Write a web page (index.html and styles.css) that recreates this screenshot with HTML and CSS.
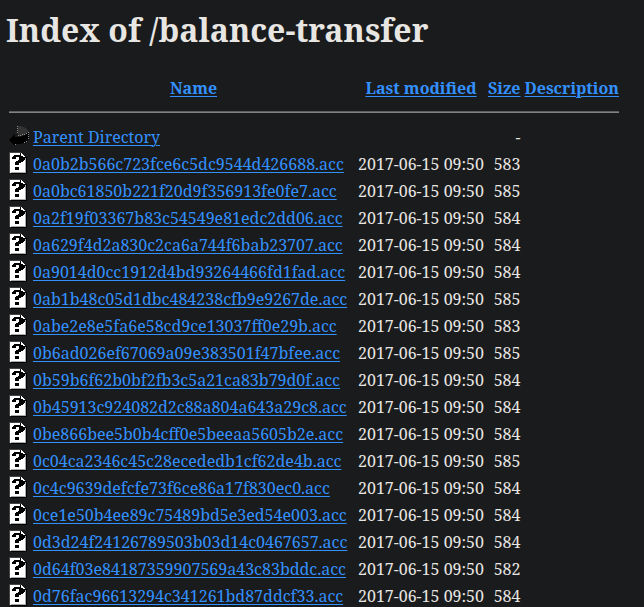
FILE: index.html
```html
<!DOCTYPE html>
<html lang="en">
<head>
<meta charset="utf-8">
<title>Index of /balance-transfer</title>
<link rel="stylesheet" href="styles.css">
</head>
<body>
<svg class="sprite" aria-hidden="true" shape-rendering="crispEdges">
  <symbol id="back" viewBox="0 0 20 22">
    <path d="M9 1h3l5 2 3 4-3 2-4 2H9z" fill="#333"/>
    <path d="M0 15l6-6v3h5l5-2 3-3h1v7l-3 3-5 2H6v2z" fill="#000"/>
    <path d="M8.500 1v8M19.500 7v7" stroke="#888" stroke-dasharray="1 1" fill="none"/>
    <path d="M9 10h1v1H9zM11 10h1v1h-1zM13 9h1v1h-1zM15 9h1v1h-1zM17 8h1v1h-1zM17 16h1v1h-1zM15 17h1v1h-1zM6 19h1v1H6z" fill="#888"/>
  </symbol>
  <symbol id="unknown" viewBox="0 0 20 22">
    <path d="M0 0h12v1H1v20H0z" fill="#444"/>
    <path d="M2 21h15V5h1v17H2z" fill="#000"/>
    <path d="M1 1h10v5h5v15H1z" fill="#fff"/>
    <path d="M16 6h1v15H2v-1h14z" fill="#aaa"/>
    <path d="M11 1h1v4h5v1h-6z" fill="#000"/>
    <path d="M12 1h1v1h1v1h1v1h1v1h-4z" fill="#fff"/>
    <path d="M5 3h7v1h2v1h2v3h-1v1h-1v1h-2v1h-2v2H6v-3h1V9h2V8h1V5H7v2H3V5h1V4h1zM6 15h4v3H6z" fill="#000"/>
  </symbol>
</svg>
<h1>Index of /balance-transfer</h1>
<table>
<thead>
<tr><th class="icon"></th><th class="name"><a href="#">Name</a></th><th><a href="#">Last modified</a></th><th><a href="#">Size</a></th><th><a href="#">Description</a></th></tr>
<tr><th colspan="5"><hr></th></tr>
</thead>
<tbody>
<tr><td><svg class="i"><use href="#back"/></svg></td><td><a href="#">Parent Directory</a></td><td></td><td>-</td><td></td></tr>
<tr><td><svg class="i"><use href="#unknown"/></svg></td><td><a href="#">0a0b2b566c723fce6c5dc9544d426688.acc</a></td><td>2017-06-15 09:50</td><td>583</td><td></td></tr>
<tr><td><svg class="i"><use href="#unknown"/></svg></td><td><a href="#">0a0bc61850b221f20d9f356913fe0fe7.acc</a></td><td>2017-06-15 09:50</td><td>585</td><td></td></tr>
<tr><td><svg class="i"><use href="#unknown"/></svg></td><td><a href="#">0a2f19f03367b83c54549e81edc2dd06.acc</a></td><td>2017-06-15 09:50</td><td>584</td><td></td></tr>
<tr><td><svg class="i"><use href="#unknown"/></svg></td><td><a href="#">0a629f4d2a830c2ca6a744f6bab23707.acc</a></td><td>2017-06-15 09:50</td><td>584</td><td></td></tr>
<tr><td><svg class="i"><use href="#unknown"/></svg></td><td><a href="#">0a9014d0cc1912d4bd93264466fd1fad.acc</a></td><td>2017-06-15 09:50</td><td>584</td><td></td></tr>
<tr><td><svg class="i"><use href="#unknown"/></svg></td><td><a href="#">0ab1b48c05d1dbc484238cfb9e9267de.acc</a></td><td>2017-06-15 09:50</td><td>585</td><td></td></tr>
<tr><td><svg class="i"><use href="#unknown"/></svg></td><td><a href="#">0abe2e8e5fa6e58cd9ce13037ff0e29b.acc</a></td><td>2017-06-15 09:50</td><td>583</td><td></td></tr>
<tr><td><svg class="i"><use href="#unknown"/></svg></td><td><a href="#">0b6ad026ef67069a09e383501f47bfee.acc</a></td><td>2017-06-15 09:50</td><td>585</td><td></td></tr>
<tr><td><svg class="i"><use href="#unknown"/></svg></td><td><a href="#">0b59b6f62b0bf2fb3c5a21ca83b79d0f.acc</a></td><td>2017-06-15 09:50</td><td>584</td><td></td></tr>
<tr><td><svg class="i"><use href="#unknown"/></svg></td><td><a href="#">0b45913c924082d2c88a804a643a29c8.acc</a></td><td>2017-06-15 09:50</td><td>584</td><td></td></tr>
<tr><td><svg class="i"><use href="#unknown"/></svg></td><td><a href="#">0be866bee5b0b4cff0e5beeaa5605b2e.acc</a></td><td>2017-06-15 09:50</td><td>584</td><td></td></tr>
<tr><td><svg class="i"><use href="#unknown"/></svg></td><td><a href="#">0c04ca2346c45c28ecededb1cf62de4b.acc</a></td><td>2017-06-15 09:50</td><td>585</td><td></td></tr>
<tr><td><svg class="i"><use href="#unknown"/></svg></td><td><a href="#">0c4c9639defcfe73f6ce86a17f830ec0.acc</a></td><td>2017-06-15 09:50</td><td>584</td><td></td></tr>
<tr><td><svg class="i"><use href="#unknown"/></svg></td><td><a href="#">0ce1e50b4ee89c75489bd5e3ed54e003.acc</a></td><td>2017-06-15 09:50</td><td>584</td><td></td></tr>
<tr><td><svg class="i"><use href="#unknown"/></svg></td><td><a href="#">0d3d24f24126789503b03d14c0467657.acc</a></td><td>2017-06-15 09:50</td><td>584</td><td></td></tr>
<tr><td><svg class="i"><use href="#unknown"/></svg></td><td><a href="#">0d64f03e84187359907569a43c83bddc.acc</a></td><td>2017-06-15 09:50</td><td>582</td><td></td></tr>
<tr><td><svg class="i"><use href="#unknown"/></svg></td><td><a href="#">0d76fac96613294c341261bd87ddcf33.acc</a></td><td>2017-06-15 09:50</td><td>584</td><td></td></tr>
</tbody>
</table>
</body>
</html>
```
FILE: styles.css
```css
html { overflow: hidden; }
body {
  margin: 0 6px;
  background: #1a1b1c;
  color: #e8e6e3;
  font: 16px/23px "Noto Serif", serif;
}
.sprite { display: none; }
h1 { margin: 0; padding-top: 8px; height: 74px; box-sizing: border-box; font-size: 32px; line-height: 44px; }
table { border-spacing: 2px; border-collapse: separate; white-space: nowrap; }
td, th { padding: 1px; vertical-align: top; }
.icon { width: 20px; }
.name { width: 321px; }
a { color: #3391ff; text-decoration: underline 1px; text-underline-offset: 2px; text-decoration-skip-ink: auto; }
hr { height: 0; margin: 7px 0 9px; border: 0; border-top: 1px solid #5c5e60; border-bottom: 1px solid #808284; }
.i { display: block; width: 20px; height: 22px; margin-top: -1px; }
td:nth-child(n+3) { text-align: right; }
```
